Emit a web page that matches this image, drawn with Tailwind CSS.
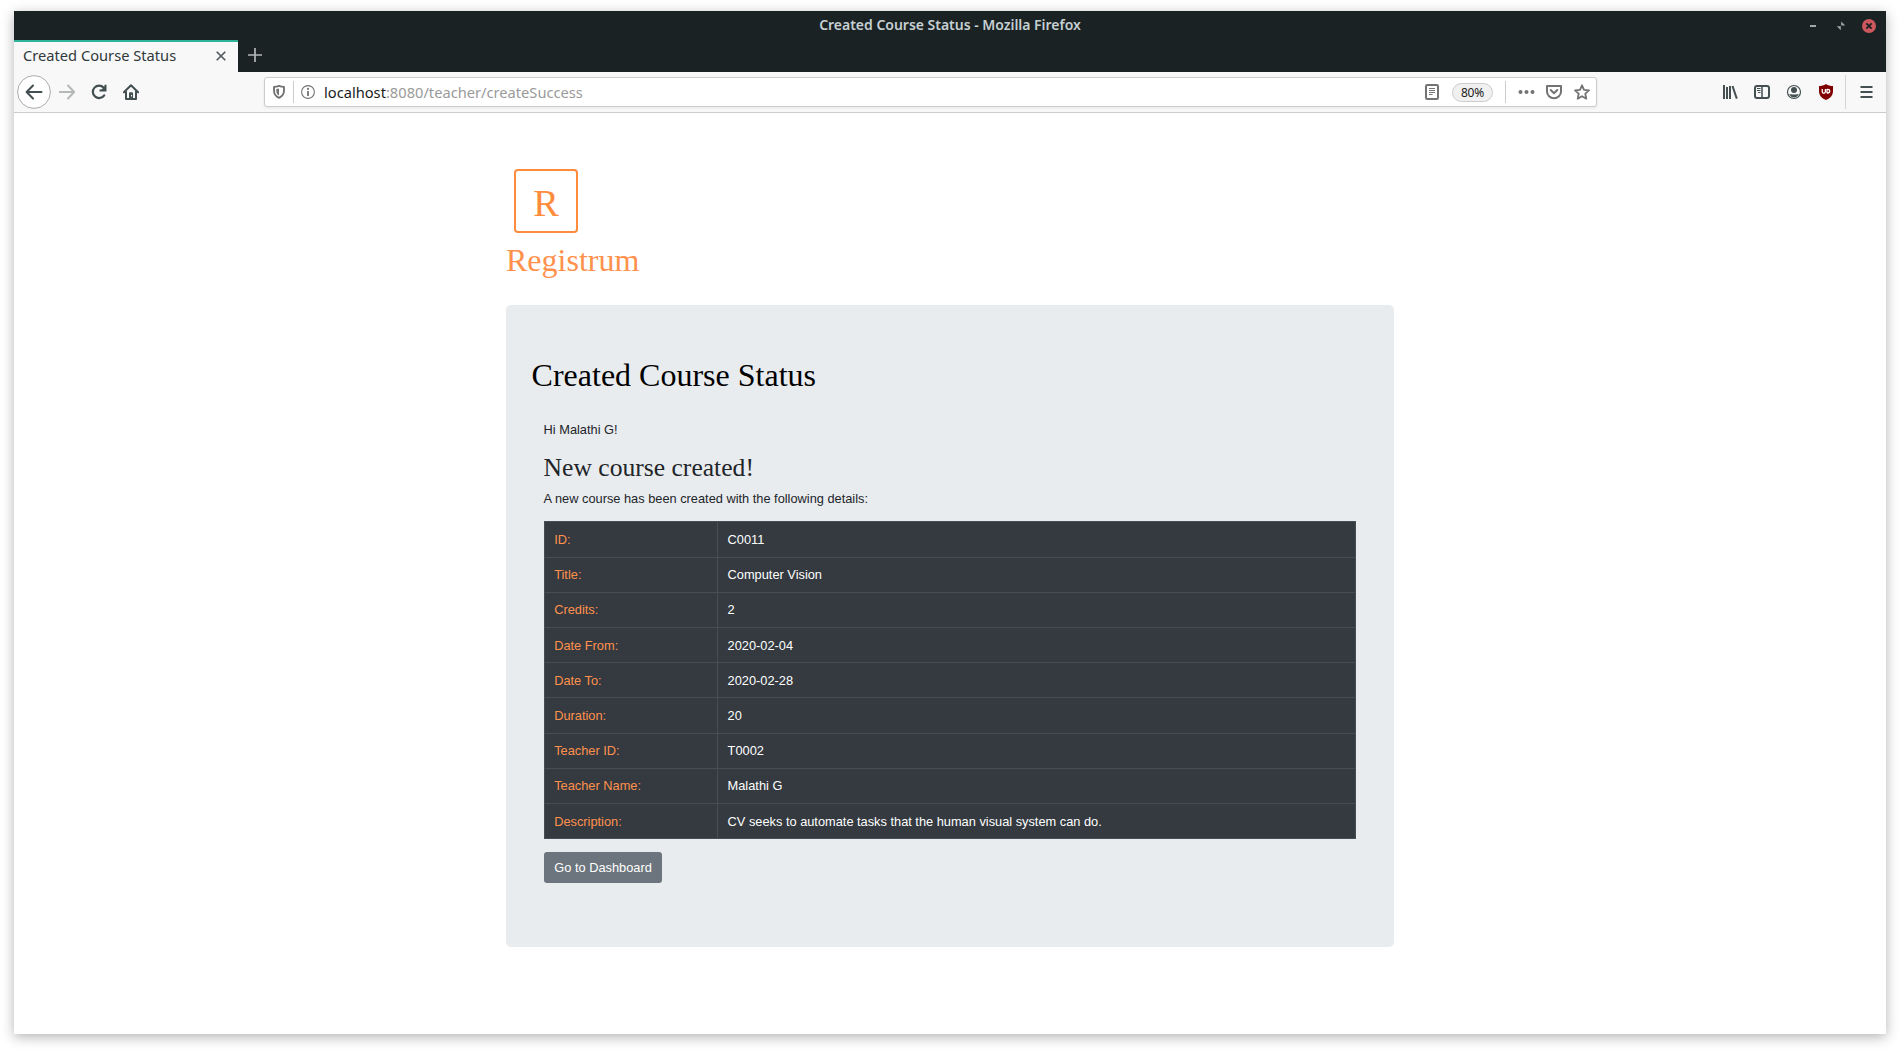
<!DOCTYPE html>
<html lang="en">
<head>
<meta charset="utf-8">
<title>Created Course Status</title>
<script src="https://cdn.jsdelivr.net/npm/@tailwindcss/browser@4"></script>
</head>
<body class="h-[1051px] overflow-hidden bg-white pl-[14px] pt-[11px] font-['Noto_Sans',sans-serif]">
<div class="flex h-[1023px] w-[1872px] flex-col bg-white shadow-[0_3px_12px_rgba(0,0,0,0.3)]">
  <!-- title bar -->
  <div class="grid h-[29px] shrink-0 grid-cols-[1fr_auto_1fr] items-center bg-[#1b2224] text-[#c5d0d2]">
    <span></span>
    <span class="pb-[1px] text-[14px] font-semibold leading-5 tracking-[-0.02px]">Created Course Status - Mozilla Firefox</span>
    <div class="flex items-center justify-end pr-[10px]">
      <svg class="h-[14px] w-2" viewBox="0 0 8 14"><path d="M1 7h6" stroke="#a0a8aa" stroke-width="2"/></svg>
      <svg class="ml-[19px] h-[14px] w-2.5" viewBox="0 0 10 14"><path d="M5.200 2.600v4h4zM.8 7.200h4v4z" fill="#a0a8aa"/></svg>
      <svg class="ml-[16px] h-[14px] w-[14px]" viewBox="0 0 14 14"><circle cx="7" cy="7" r="7" fill="#cc575d"/><path d="M4.400 4.400l5.200 5.200M9.600 4.400L4.400 9.600" stroke="#1b2224" stroke-width="1.800"/></svg>
    </div>
  </div>
  <!-- tab strip -->
  <div class="flex h-8 shrink-0 bg-[#1b2224]">
    <div class="flex w-[224px] items-center justify-between border-t-2 border-[#2eb398] bg-[#f8f8f8] pl-[9px] pr-3">
      <span class="pb-[4px] text-[14.667px] leading-5 text-[#2f383a]">Created Course Status</span>
      <svg class="mb-[2px] h-[10px] w-[10px]" viewBox="0 0 10 10"><path d="M.7.7l8.600 8.600M9.300.7L.7 9.300" stroke="#4f585a" stroke-width="1.600"/></svg>
    </div>
    <svg class="ml-[10px] mt-2 h-[14px] w-[14px]" viewBox="0 0 14 14"><path d="M7 0v14M0 7h14" stroke="#b4b8b9" stroke-width="1.700"/></svg>
  </div>
  <!-- navigation toolbar -->
  <div class="flex h-[41px] shrink-0 items-center border-b border-[#cccccc] bg-[#f8f8f8]">
    <svg class="ml-[3px] h-[34px] w-[34px]" viewBox="0 0 34 34" fill="none"><circle cx="17" cy="17" r="16.400" fill="#fff" stroke="#aaa"/><path d="M24.500 17H10M16 10.500L9.600 17l6.400 6.500" stroke="#434f50" stroke-width="2" stroke-linecap="round" stroke-linejoin="round"/></svg>
    <svg class="ml-[8px] h-4 w-4" viewBox="0 0 16 16" fill="none"><path d="M.8 8H15M9 1.500L15.200 8 9 14.500" stroke="#b5b8b9" stroke-width="2" stroke-linecap="round" stroke-linejoin="round"/></svg>
    <svg class="ml-[16px] h-4 w-4" viewBox="0 0 16 16" fill="none"><path d="M12.600 3.600A6.200 6.200 0 1 0 13.200 11.300" stroke="#434f50" stroke-width="2.200" stroke-linecap="round"/><path d="M9.500 6.500h5V1.700" stroke="#434f50" stroke-width="2" stroke-linecap="square"/><path d="M10 6l4.500-4.500V7H10z" fill="#434f50"/></svg>
    <svg class="ml-[16px] h-4 w-4" viewBox="0 0 16 16" fill="none"><path d="M.9 8.300L8 1.200l7.100 7.100M3 7.800V15h10V7.800" stroke="#434f50" stroke-width="2" stroke-linecap="round" stroke-linejoin="round"/><path d="M6 15V9.300q0-1 1-1h2q1 0 1 1V15z" fill="#434f50"/><rect x="8" y="11" width="1" height="1.500" fill="#fff"/></svg>
    <div class="ml-[125px] flex h-[30px] w-[1333px] items-center rounded-[3px] border border-[#cccccc] bg-white shadow-[0_1px_3px_rgba(0,0,0,0.08)]">
      <svg class="ml-[7px] h-[14px] w-[14px]" viewBox="0 0 14 14" fill="none"><path d="M7 .9C5.300 1.500 3.500 1.800 2 1.900v3.700c0 3.300 1.700 5.900 5 7.300 3.300-1.400 5-4 5-7.300V1.900C10.500 1.800 8.700 1.500 7 .9z" stroke="#737373" stroke-width="1.900" stroke-linejoin="round"/><path d="M7 3.500v7C5.200 9.500 4.300 7.800 4.300 5.700V4c1-.1 1.900-.3 2.700-.5z" fill="#737373"/></svg>
      <span class="ml-[7px] h-[22px] w-px bg-[#ccc]"></span>
      <svg class="ml-[7px] h-[14px] w-[14px]" viewBox="0 0 14 14" fill="none"><circle cx="7" cy="7" r="6.400" stroke="#737373" stroke-width="1.100"/><path d="M7 6v5" stroke="#737373" stroke-width="1.800"/><circle cx="7" cy="3.900" r="1.100" fill="#737373"/></svg>
      <span class="ml-[9px] pb-px text-[14.667px] leading-5 text-[#9a9a9a]"><span class="text-[#1b1b1b]">localhost</span>:8080/teacher/createSuccess</span>
      <div class="ml-auto flex items-center">
        <svg class="h-4 w-[14px]" viewBox="0 0 14 16" fill="none"><rect x="1" y="1" width="12" height="14" rx="1.300" stroke="#737373" stroke-width="2"/><path d="M4 4.500h6M4 6.500h6M4 8.500h6M4 10.500h3.500" stroke="#737373"/></svg>
        <span class="ml-[13px] flex h-[19px] w-[41px] items-center justify-center rounded-full border border-[#ccc] bg-[#f0f0f0] pt-px text-[12px] leading-4 tracking-[-0.2px] text-[#222]">80%</span>
        <span class="ml-[12px] h-[22px] w-px bg-[#ccc]"></span>
        <svg class="ml-3 h-4 w-[17px]" viewBox="0 0 17 16" fill="#737373"><circle cx="2.500" cy="8" r="2"/><circle cx="8.500" cy="8" r="2"/><circle cx="14.500" cy="8" r="2"/></svg>
        <svg class="ml-[11px] h-4 w-4" viewBox="0 0 16 16" fill="none"><path d="M1 2h14v5.500a7 6.700 0 0 1-14 0z" stroke="#737373" stroke-width="2" stroke-linejoin="round"/><path d="M4.700 6L8 9.200 11.300 6" stroke="#737373" stroke-width="2" stroke-linecap="round" stroke-linejoin="round"/></svg>
        <svg class="ml-3 mr-[6px] h-4 w-4" viewBox="0 0 16 16" fill="none"><path d="M8 1.300l2 4.500 5 .5-3.700 3.400 1 5L8 12.200l-4.300 2.500 1-5L1 6.300l5-.5z" stroke="#737373" stroke-width="1.800" stroke-linejoin="round"/></svg>
      </div>
    </div>
    <div class="ml-auto flex h-full items-center pr-[13px]">
      <svg class="h-4 w-4" viewBox="0 0 16 16" fill="none" stroke="#434f50" stroke-width="2"><path d="M2 1v14M5 3v12M8 2v13M10.500 2l4.300 12.600"/></svg>
      <svg class="ml-[16px] h-4 w-4" viewBox="0 0 16 16" fill="none" stroke="#434f50"><rect x="1" y="2" width="14" height="12" rx="2" stroke-width="2"/><path d="M8 2v12" stroke-width="1.500"/><path d="M3 4.500h3.500M3 6.500h3.500M4 8.500h2.500"/></svg>
      <svg class="ml-4 h-4 w-4" viewBox="0 0 16 16" fill="none"><circle cx="8" cy="8" r="6.500" stroke="#434f50" stroke-width="1.200"/><circle cx="8" cy="6" r="3" fill="#434f50"/><path d="M3.200 10q2.300 0 3 .5h3.600q.7-.5 3-.5Q11 13.500 8 13.500T3.200 10z" fill="#434f50"/></svg>
      <svg class="ml-4 h-4 w-4" viewBox="0 0 16 16"><path d="M8 0c2 1.500 4.700 2 7 2v5c0 4.500-2.500 7-7 9-4.500-2-7-4.500-7-9V2c2.300 0 5-.5 7-2z" fill="#800000"/><path d="M4.200 5v2.600q0 1.700 1.600 1.700t1.600-1.700V5M9 5v4.300M9 5.400h.7q2 0 2 1.800t-2 1.800H9" fill="none" stroke="#fff" stroke-width="1.300"/></svg>
      <span class="ml-[11px] h-[34px] w-px bg-[#d4d4d4]"></span>
      <svg class="ml-[14px] h-[14px] w-[13px]" viewBox="0 0 13 14"><path d="M.5 2h12M.5 7h12M.5 12h12" stroke="#434f50" stroke-width="2"/></svg>
    </div>
  </div>
  <!-- page -->
  <main class="ml-[492px] w-[888px] pt-[56px] font-['Liberation_Sans',sans-serif] text-[12.8px] leading-[19.2px] text-[#212529]">
    <div class="ml-2 flex h-16 w-16 items-center justify-center rounded-[4px] border-2 border-[#ff8b3d] pt-[5px] font-['Liberation_Serif',serif] text-[38.4px] leading-none text-[#ff8b3d]">R</div>
    <div class="mt-[8px] font-['Liberation_Serif',serif] text-[32px] leading-[38px] text-[#ff914d]">Registrum</div>
    <section class="mt-[26px] h-[642px] rounded-[5px] bg-[#e9ecef] px-[25.6px] pt-[51px]">
      <h1 class="font-['Liberation_Serif',serif] text-[32px] leading-[38px] text-black">Created Course Status</h1>
      <div class="ml-[12px] mt-[26px] w-[812px]">
        <p>Hi Malathi G!</p>
        <h2 class="mt-[13px] font-['Liberation_Serif',serif] text-[25.6px] leading-[31px]">New course created!</h2>
        <p class="mt-[6px]">A new course has been created with the following details:</p>
        <table class="mt-[13px] w-full table-fixed border-collapse border border-[#454d55] bg-[#343a40] text-white [&_td]:h-[35.2px] [&_td]:border [&_td]:border-[#454d55] [&_td]:px-[10px] [&_td]:pb-0 [&_td]:pt-[0.3px] [&_td:first-child]:pl-[9.6px] [&_td:first-child]:text-[#ff914d]">
          <colgroup><col class="w-[173px]"><col></colgroup>
          <tbody>
            <tr><td>ID:</td><td>C0011</td></tr>
            <tr><td>Title:</td><td>Computer Vision</td></tr>
            <tr><td>Credits:</td><td>2</td></tr>
            <tr><td>Date From:</td><td>2020-02-04</td></tr>
            <tr><td>Date To:</td><td>2020-02-28</td></tr>
            <tr><td>Duration:</td><td>20</td></tr>
            <tr><td>Teacher ID:</td><td>T0002</td></tr>
            <tr><td>Teacher Name:</td><td>Malathi G</td></tr>
            <tr><td>Description:</td><td>CV seeks to automate tasks that the human visual system can do.</td></tr>
          </tbody>
        </table>
        <button class="mt-[13px] flex h-[31px] w-[118px] items-center justify-center rounded-[3px] bg-[#6c757d] pl-px text-white">Go to Dashboard</button>
      </div>
    </section>
  </main>
</div>
</body>
</html>
